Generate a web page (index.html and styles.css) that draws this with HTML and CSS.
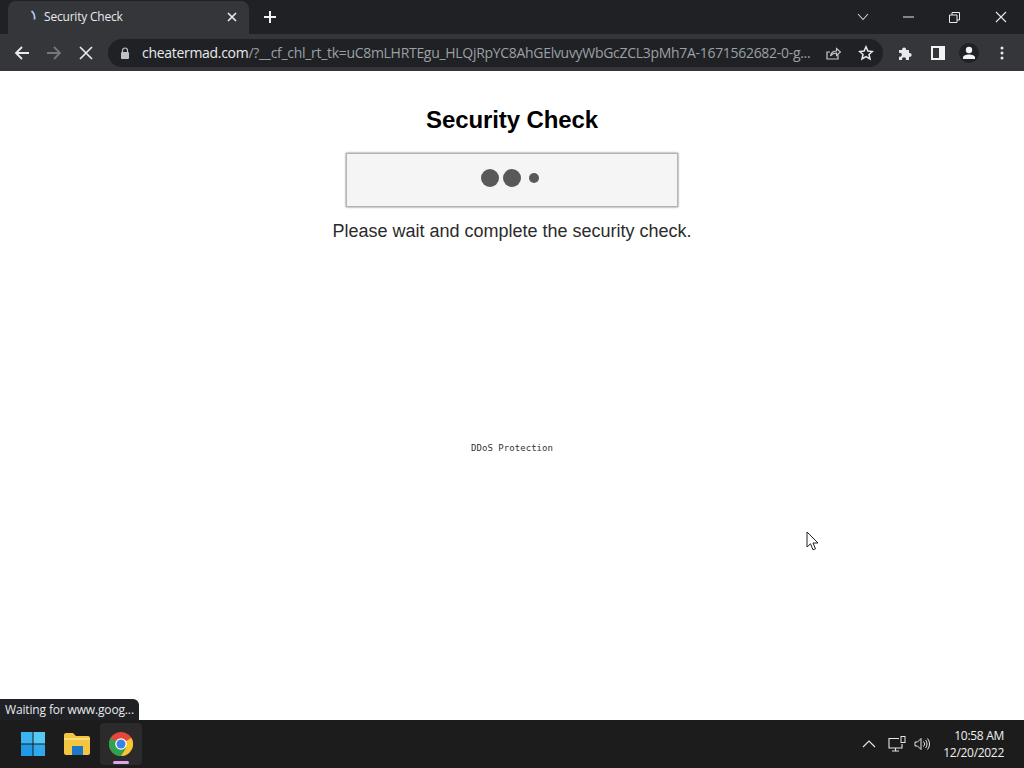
FILE: index.html
```html
<!DOCTYPE html>
<html lang="en">
<head>
    <meta charset="UTF-8">
    <title>Security Check</title>
    <link rel="stylesheet" href="styles.css">
</head>
<body>
    <div class="screen">
        <div class="tabstrip">
            <div class="tab">
                <svg class="tab-spinner" width="16" height="16" viewBox="0 0 16 16"><path d="M3.500 2c2.500 2 3.500 4.500 3 8.500" fill="none" stroke="#a8c0ee" stroke-width="1.800"/></svg>
                <span class="tab-title">Security Check</span>
                <svg class="tab-close" width="10" height="10" viewBox="0 0 10 10"><path d="M1 1l8 8M9 1l-8 8" stroke="#e8eaed" stroke-width="1.700"/></svg>
            </div>
            <svg class="new-tab" width="14" height="14" viewBox="0 0 14 14"><path d="M7 1v12M1 7h12" stroke="#f1f3f4" stroke-width="2"/></svg>
            <div class="window-controls">
                <svg class="tab-search" width="12" height="8" viewBox="0 0 12 8"><path d="M1 1l5 5.500 5-5.500" fill="none" stroke="#d0d2d5" stroke-width="1.100"/></svg>
                <svg class="win-min" width="11" height="2" viewBox="0 0 11 2"><path d="M0 1h11" stroke="#e8eaed" stroke-width="1"/></svg>
                <svg class="win-max" width="11" height="11" viewBox="0 0 11 11"><path d="M.5 3h7.500v7.500H.5zM3 3V.5h7.500V8H8" fill="none" stroke="#e8eaed" stroke-width="1"/></svg>
                <svg class="win-close" width="12" height="12" viewBox="0 0 12 12"><path d="M1 1l10 10M11 1L1 11" stroke="#e8eaed" stroke-width="1.100"/></svg>
            </div>
        </div>
        <div class="toolbar">
            <svg class="nav-btn nav-back" width="16" height="16" viewBox="0 0 16 16"><path d="M15 8H2M8 2L2 8l6 6" fill="none" stroke="#e8eaed" stroke-width="1.800"/></svg>
            <svg class="nav-btn nav-forward" width="16" height="16" viewBox="0 0 16 16"><path d="M1 8h13M8 2l6 6-6 6" fill="none" stroke="#75777a" stroke-width="1.800"/></svg>
            <svg class="nav-btn nav-stop" width="14" height="14" viewBox="0 0 14 14"><path d="M1 1l12 12M13 1L1 13" stroke="#e8eaed" stroke-width="1.700"/></svg>
            <div class="omnibox">
                <svg class="lock" width="10" height="12" viewBox="0 0 10 12"><path d="M2.500 5V3.500a2.500 2.500 0 0 1 5 0V5" fill="none" stroke="#bdc1c6" stroke-width="1.200"/><rect x="1" y="5" width="8" height="7" rx="1" fill="#bdc1c6"/></svg>
                <span class="url"><span class="url-host">cheatermad.com</span>/?__cf_chl_rt_tk=uC8mLHRTEgu_HLQjRpYC8AhGElvuvyWbGcZCL3pMh7A-1671562682-0-g...</span>
                <svg class="omni-icon" width="16" height="16" viewBox="0 0 16 16"><path d="M13 10v4H2V7h3" fill="none" stroke="#c8cacd" stroke-width="1.200"/><path d="M5.500 11c.5-3 2.500-5 6-5V3.500L15.500 7l-4 3.500V8c-2.500 0-4.500 1-6 3z" fill="none" stroke="#c8cacd" stroke-width="1.100"/></svg>
                <svg class="omni-icon star" width="16" height="16" viewBox="0 0 16 16"><path d="M8 1.800l1.900 4.200 4.500.5-3.400 3 1 4.500L8 11.700 4 14l1-4.500-3.400-3 4.500-.5z" fill="none" stroke="#e8eaed" stroke-width="1.500"/></svg>
            </div>
            <div class="toolbar-actions">
                <svg width="16" height="16" viewBox="0 0 16 16"><path d="M1 5h3.200a2 2 0 1 1 3.800 0h3v3a2 2 0 1 1 0 3.800V15H7.800a2 2 0 1 0-3.600 0H1v-3.500a2 2 0 1 0 0-3.600z" fill="#e8eaed"/></svg>
                <svg class="side-panel" width="14" height="14" viewBox="0 0 14 14"><path d="M1 1h12v12H1z" fill="none" stroke="#f1f3f4" stroke-width="2"/><path d="M8 1h5v12H8z" fill="#f1f3f4"/></svg>
                <span class="avatar"><svg width="14" height="14" viewBox="0 0 14 14"><circle cx="7" cy="4" r="3.200" fill="#f1f3f4"/><path d="M1 13v-1.500C1 9.500 4 8.500 7 8.500s6 1 6 3V13z" fill="#f1f3f4"/></svg></span>
                <svg width="4" height="14" viewBox="0 0 4 14"><circle cx="2" cy="2" r="1.500" fill="#e8eaed"/><circle cx="2" cy="7" r="1.500" fill="#e8eaed"/><circle cx="2" cy="12" r="1.500" fill="#e8eaed"/></svg>
            </div>
        </div>
        <main class="page">
            <h1>Security Check</h1>
            <div class="captcha">
                <span class="dot"></span>
                <span class="dot"></span>
                <span class="dot dot-small"></span>
            </div>
            <p class="wait-text">Please wait and complete the security check.</p>
            <p class="ddos">DDoS Protection</p>
            <div class="status-bubble">Waiting for www.goog...</div>
            <svg class="cursor" width="13" height="20" viewBox="0 0 13 20"><path d="M1 1v15l3.500-3.200 2.500 6 2.500-1-2.500-5.800H12z" fill="#fff" stroke="#222" stroke-width="1"/></svg>
        </main>
        <div class="taskbar">
            <div class="task-icons">
                <span class="task-item">
                    <svg width="24" height="24" viewBox="0 0 24 24"><rect x="0" y="0" width="11.500" height="11.500" fill="#3cb4f2"/><rect x="12.500" y="0" width="11.500" height="11.500" fill="#56c8f6"/><rect x="0" y="12.500" width="11.500" height="11.500" fill="#1f9ae6"/><rect x="12.500" y="12.500" width="11.500" height="11.500" fill="#2fa8ec"/></svg>
                </span>
                <span class="task-item">
                    <svg width="26" height="22" viewBox="0 0 26 22"><path d="M0 2a2 2 0 0 1 2-2h7l3 3h12a2 2 0 0 1 2 2v15a2 2 0 0 1-2 2H2a2 2 0 0 1-2-2z" fill="#f4c542"/><path d="M0 5h26v2H0z" fill="#fbdc74"/><rect x="8" y="13" width="11" height="9" fill="#1a78c8"/></svg>
                </span>
                <span class="task-item task-active">
                    <svg width="24" height="24" viewBox="0 0 24 24"><circle cx="12" cy="12" r="12" fill="#e4483a"/><path d="M12 12L22.400 6A12 12 0 0 1 12 24z" fill="#f9c62e"/><path d="M12 12l-10.400-6A12 12 0 0 0 12 24l5-8z" fill="#30a14e"/><circle cx="12" cy="12" r="5.800" fill="#fff"/><circle cx="12" cy="12" r="4.500" fill="#3b82e8"/></svg>
                    <span class="task-underline"></span>
                </span>
            </div>
            <div class="tray">
                <svg width="14" height="8" viewBox="0 0 14 8"><path d="M1 7l6-6 6 6" fill="none" stroke="#e6e6e6" stroke-width="1.200"/></svg>
                <svg class="tray-network" width="18" height="16" viewBox="0 0 18 16"><path d="M11 2.500H1v9.500h13V8M7.500 12v3M4 15h7" fill="none" stroke="#e6e6e6" stroke-width="1.100"/><rect x="13" y=".5" width="4" height="6" fill="none" stroke="#e6e6e6"/></svg>
                <svg class="tray-volume" width="17" height="14" viewBox="0 0 17 14"><path d="M1 5v4h2.500L7 12.500V1.500L3.500 5z" fill="none" stroke="#e6e6e6"/><path d="M9.500 4.500a3.500 3.500 0 0 1 0 5M11.500 3a6 6 0 0 1 0 8M13.500 1.500a8.500 8.500 0 0 1 0 11" fill="none" stroke="#e6e6e6"/></svg>
                <div class="clock">
                    <span>10:58 AM</span>
                    <span>12/20/2022</span>
                </div>
            </div>
        </div>
    </div>
</body>
</html>
```

FILE: styles.css
```css
html, body {
    margin: 0;
    padding: 0;
}
.screen {
    width: 1024px;
    height: 768px;
    display: flex;
    flex-direction: column;
    overflow: hidden;
    font-family: "Open Sans", "Noto Sans", sans-serif;
}
.tabstrip {
    height: 34px;
    background: #202124;
    display: flex;
    align-items: flex-end;
    flex-shrink: 0;
}
.tab {
    width: 241px;
    height: 33px;
    margin-left: 8px;
    background: #35363a;
    border-radius: 8px 8px 0 0;
    display: flex;
    align-items: center;
    box-sizing: border-box;
    padding: 0 12px 2px 20px;
    color: #e8eaed;
    font-size: 12px;
    letter-spacing: -0.2px;
}
.tab-title {
    flex: 1;
}
.new-tab {
    margin: 0 0 10px 14px;
}
.window-controls {
    margin-left: auto;
    display: flex;
    align-items: center;
    align-self: center;
    padding-right: 17px;
    height: 30px;
}
.tab-search {
    margin-right: 34px;
}
.win-min {
    margin-right: 35px;
}
.win-max {
    margin-right: 35px;
}
.toolbar {
    height: 37px;
    background: #35363a;
    display: flex;
    align-items: center;
    flex-shrink: 0;
    box-sizing: border-box;
    padding-left: 14px;
}
.nav-forward {
    margin-left: 16px;
}
.nav-stop {
    margin-left: 17px;
}
.omnibox {
    width: 775px;
    height: 28px;
    margin-left: 15px;
    background: #202124;
    border-radius: 14px;
    display: flex;
    align-items: center;
    box-sizing: border-box;
    padding-left: 12px;
    color: #9aa0a6;
    font-size: 14px;
}
.lock {
    flex-shrink: 0;
}
.url {
    margin-left: 12px;
    width: 667px;
    flex-shrink: 0;
    white-space: nowrap;
    letter-spacing: -0.3px;
}
.url-host {
    color: #e8eaed;
}
.omni-icon {
    margin-left: 16px;
    flex-shrink: 0;
}
.star {
    margin-left: 17px;
}
.toolbar-actions {
    display: flex;
    align-items: center;
    margin-left: 15px;
    gap: 13px;
}
.side-panel {
    margin: 0 1px 0 4px;
}
.avatar {
    width: 20px;
    height: 20px;
    margin-right: 8px;
    border-radius: 50%;
    background: #202124;
    display: flex;
    align-items: center;
    justify-content: center;
}
.page {
    flex: 1;
    position: relative;
    background: #fff;
    text-align: center;
    font-family: "Liberation Sans", Arial, sans-serif;
    overflow: hidden;
}
h1 {
    margin: 35px 0 0;
    font-size: 24px;
    line-height: 28px;
    letter-spacing: -0.1px;
    color: #000;
}
.captcha {
    width: 332px;
    height: 54px;
    box-sizing: border-box;
    margin: 19px auto 0;
    background: #f5f5f5;
    border: 1px solid #b4b4b4;
    box-shadow: 0 0 2px rgba(0, 0, 0, 0.6);
    display: flex;
    align-items: center;
    justify-content: center;
    gap: 4px;
    padding-bottom: 4px;
}
.dot {
    width: 18px;
    height: 18px;
    border-radius: 50%;
    background: #595959;
}
.dot-small {
    width: 10px;
    height: 10px;
    margin: 0 4px;
}
.wait-text {
    margin: 13px 0 0;
    font-size: 18px;
    line-height: 22px;
    color: #2b2b2b;
}
.ddos {
    margin: 200px 0 0;
    font-family: "DejaVu Sans Mono", monospace;
    font-size: 9px;
    line-height: 12px;
    letter-spacing: 0.05px;
    color: #333;
}
.status-bubble {
    position: absolute;
    left: 0;
    bottom: 0;
    height: 21px;
    line-height: 21px;
    padding: 0 5px;
    background: #202124;
    border-radius: 0 6px 0 0;
    color: #e8eaed;
    font-family: "Open Sans", sans-serif;
    font-size: 12px;
    letter-spacing: -0.15px;
}
.cursor {
    position: absolute;
    left: 806px;
    top: 460px;
}
.taskbar {
    height: 48px;
    background: #1c1c1c;
    display: flex;
    align-items: center;
    justify-content: space-between;
    flex-shrink: 0;
}
.task-icons {
    display: flex;
    align-items: center;
    margin-left: 12px;
    gap: 2px;
}
.task-item {
    width: 42px;
    height: 42px;
    display: flex;
    align-items: center;
    justify-content: center;
    position: relative;
    border-radius: 4px;
}
.task-active {
    background: #2b2b2b;
}
.task-underline {
    position: absolute;
    left: 13px;
    bottom: 1px;
    width: 16px;
    height: 3px;
    border-radius: 2px;
    background: #d9a6e8;
}
.tray {
    display: flex;
    align-items: center;
    padding-right: 20px;
    color: #f0f0f0;
    font-family: "Open Sans", sans-serif;
    font-size: 12px;
}
.tray-network {
    margin-left: 12px;
}
.tray-volume {
    margin-left: 8px;
}
.clock {
    display: flex;
    flex-direction: column;
    align-items: flex-end;
    margin-left: 12px;
    line-height: 17px;
    letter-spacing: -0.3px;
}
```
